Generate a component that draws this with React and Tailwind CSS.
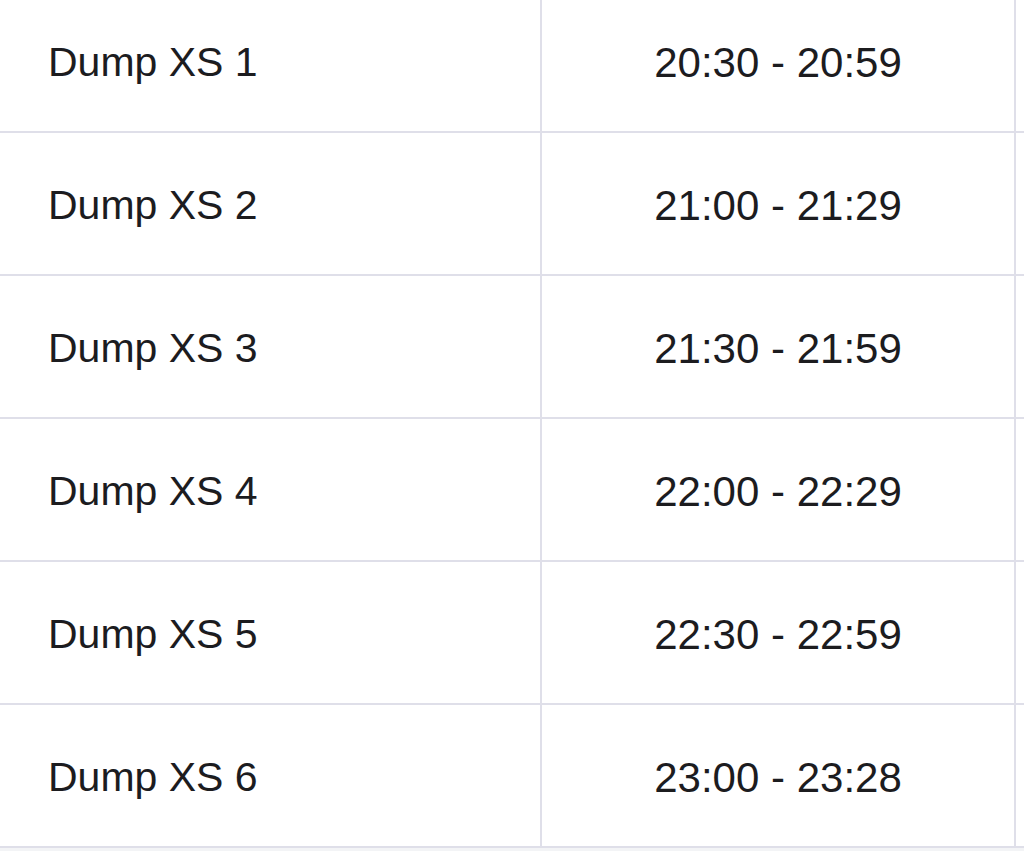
const rows = [
  { name: 'Dump XS 1', time: '20:30 - 20:59' },
  { name: 'Dump XS 2', time: '21:00 - 21:29' },
  { name: 'Dump XS 3', time: '21:30 - 21:59' },
  { name: 'Dump XS 4', time: '22:00 - 22:29' },
  { name: 'Dump XS 5', time: '22:30 - 22:59' },
  { name: 'Dump XS 6', time: '23:00 - 23:28' },
];

export default function App() {
  return (
    <div
      className="w-[1024px] h-[851px] overflow-hidden bg-[#f3f4f6] text-[#1c1c1f]"
      style={{ fontFamily: '"Liberation Sans", Arial, sans-serif' }}
    >
      {/* table is scrolled so the first row is cut at the top */}
      <div className="bg-white -mt-[10px]">
        {rows.map((row) => (
          <div key={row.name} className="flex h-[143px] border-b-2 border-[#dfdfe9]">
            <div className="w-[542px] shrink-0 flex items-center pl-[48px] pt-[4px] border-r-2 border-[#dfdfe9] text-[41px]">
              {row.name}
            </div>
            <div className="w-[474px] shrink-0 flex items-center justify-center pt-[4px] border-r-2 border-[#dfdfe9] text-[42px]">
              {row.time}
            </div>
            <div className="flex-1" />
          </div>
        ))}
      </div>
    </div>
  );
}
